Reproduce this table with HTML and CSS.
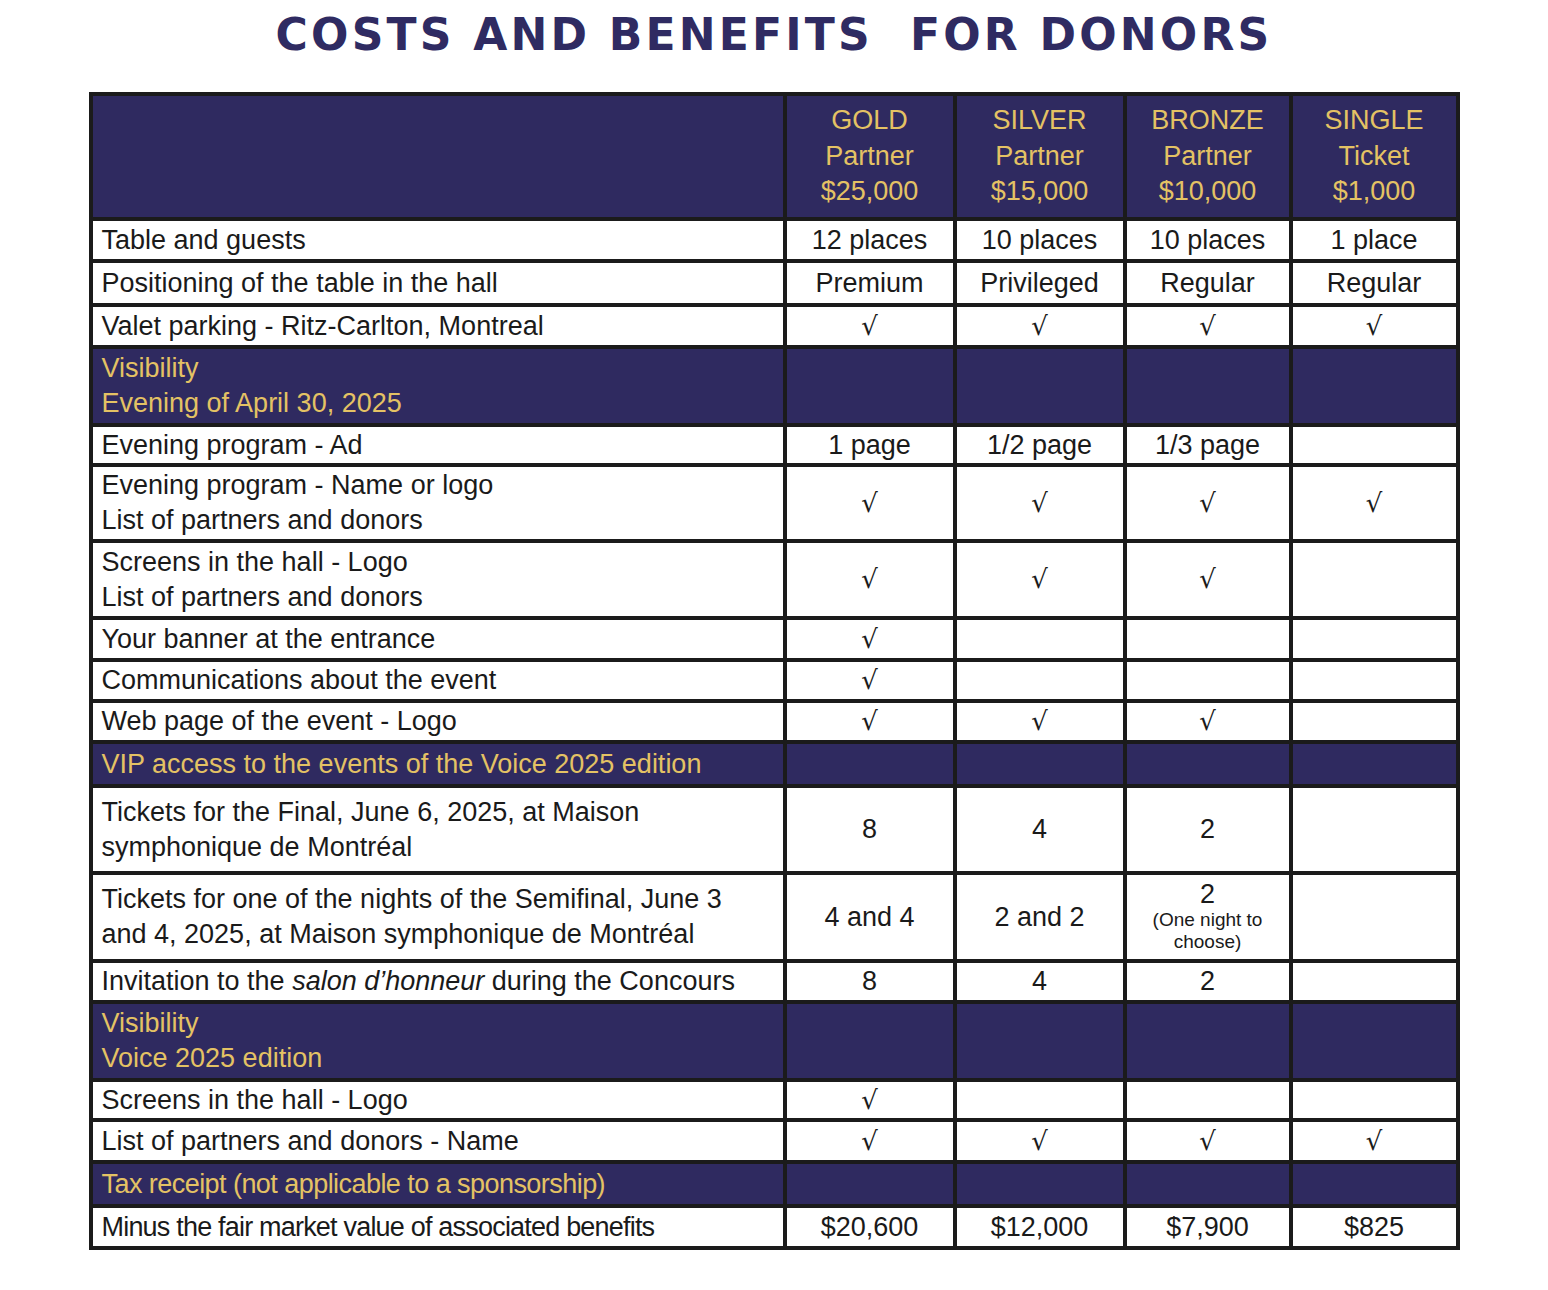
FILE: index.html
```html
<!DOCTYPE html>
<html>
<head>
<meta charset="utf-8">
<link rel="stylesheet" href="styles.css">
</head>
<body>
<h1 class="title">COSTS AND BENEFITS&nbsp; FOR DONORS</h1>
<table class="grid">
  <colgroup>
    <col class="c-label"><col class="c-gold"><col class="c-silver"><col class="c-bronze"><col class="c-single">
  </colgroup>
  <tr class="head h-head">
    <td></td>
    <td>GOLD<br>Partner<br>$25,000</td>
    <td>SILVER<br>Partner<br>$15,000</td>
    <td>BRONZE<br>Partner<br>$10,000</td>
    <td>SINGLE<br>Ticket<br>$1,000</td>
  </tr>
  <tr class="h42"><td>Table and guests</td><td>12 places</td><td>10 places</td><td>10 places</td><td>1 place</td></tr>
  <tr class="h44"><td>Positioning of the table in the hall</td><td>Premium</td><td>Privileged</td><td>Regular</td><td>Regular</td></tr>
  <tr class="h42"><td>Valet parking - Ritz-Carlton, Montreal</td><td class="ck">√</td><td class="ck">√</td><td class="ck">√</td><td class="ck">√</td></tr>
  <tr class="sec h78"><td>Visibility<br>Evening of April 30, 2025</td><td></td><td></td><td></td><td></td></tr>
  <tr class="h40"><td>Evening program - Ad</td><td>1 page</td><td>1/2 page</td><td>1/3 page</td><td></td></tr>
  <tr class="h76"><td>Evening program - Name or logo<br>List of partners and donors</td><td class="ck">√</td><td class="ck">√</td><td class="ck">√</td><td class="ck">√</td></tr>
  <tr class="h77"><td>Screens in the hall - Logo<br>List of partners and donors</td><td class="ck">√</td><td class="ck">√</td><td class="ck">√</td><td></td></tr>
  <tr class="h42"><td>Your banner at the entrance</td><td class="ck">√</td><td></td><td></td><td></td></tr>
  <tr class="h41"><td>Communications about the event</td><td class="ck">√</td><td></td><td></td><td></td></tr>
  <tr class="h41"><td>Web page of the event - Logo</td><td class="ck">√</td><td class="ck">√</td><td class="ck">√</td><td></td></tr>
  <tr class="sec h44"><td>VIP access to the events of the Voice 2025 edition</td><td></td><td></td><td></td><td></td></tr>
  <tr class="h87"><td>Tickets for the Final, June 6, 2025, at Maison<br>symphonique de Montréal</td><td>8</td><td>4</td><td>2</td><td></td></tr>
  <tr class="h88"><td>Tickets for one of the nights of the Semifinal, June 3<br>and 4, 2025, at Maison symphonique de Montréal</td><td>4 and 4</td><td>2 and 2</td><td class="stack">2<span class="note">(One night to<br>choose)</span></td><td></td></tr>
  <tr class="h41"><td>Invitation to the <em>salon d’honneur</em> during the Concours</td><td>8</td><td>4</td><td>2</td><td></td></tr>
  <tr class="sec h78"><td>Visibility<br>Voice 2025 edition</td><td></td><td></td><td></td><td></td></tr>
  <tr class="h40"><td>Screens in the hall - Logo</td><td class="ck">√</td><td></td><td></td><td></td></tr>
  <tr class="h42"><td>List of partners and donors - Name</td><td class="ck">√</td><td class="ck">√</td><td class="ck">√</td><td class="ck">√</td></tr>
  <tr class="sec h44"><td class="snug">Tax receipt (not applicable to a sponsorship)</td><td></td><td></td><td></td><td></td></tr>
  <tr class="h42"><td class="tight">Minus the fair market value of associated benefits</td><td>$20,600</td><td>$12,000</td><td>$7,900</td><td>$825</td></tr>
</table>
</body>
</html>
```
FILE: styles.css
```css
html, body {
  margin: 0;
  padding: 0;
  background: #ffffff;
}
body {
  font-family: "Liberation Sans", Arial, sans-serif;
  color: #1a1a1a;
}
.title {
  margin: 0;
  padding-top: 12px;
  height: 80px;
  box-sizing: border-box;
  text-align: center;
  font-family: "DejaVu Sans", "Liberation Sans", sans-serif;
  font-weight: bold;
  font-size: 44px;
  letter-spacing: 3.2px;
  line-height: 46px;
  color: #2f2b62;
  white-space: pre;
}
.grid {
  margin: 12px auto 0 auto;
  width: 1371px;
  border-collapse: collapse;
  table-layout: fixed;
  border: 4px solid #1b1b1b;
  font-size: 27px;
}
.c-label { width: 694px; }
.c-gold { width: 170px; }
.c-silver { width: 170px; }
.c-bronze { width: 166px; }
.c-single { width: 167px; }
.grid td {
  border: 4px solid #1b1b1b;
  padding: 0 0 0 9px;
  vertical-align: middle;
  line-height: 35px;
  text-align: center;
  color: #1a1a1a;
}
.grid td:first-child {
  text-align: left;
}
.grid td + td {
  padding: 0;
}
.grid td.tight {
  letter-spacing: -0.8px;
}
.grid td.snug {
  letter-spacing: -0.55px;
}
.head td, .sec td {
  background: #2f2a60;
  color: #e4c264;
}
.grid .sec td {
  color: #e4c264;
}
.head td {
  font-size: 27px;
  line-height: 35.5px;
}
.ck {
  font-family: "DejaVu Serif", "Liberation Serif", serif;
  font-size: 26px;
  color: #3a3a3a;
}
.grid td.stack {
  line-height: 26px;
}
.note {
  display: block;
  margin-top: 2px;
  font-size: 19px;
  line-height: 22px;
}
.h-head { height: 125px; }
.h40 { height: 40px; }
.h41 { height: 41px; }
.h42 { height: 42px; }
.h44 { height: 44px; }
.h76 { height: 76px; }
.h77 { height: 77px; }
.h78 { height: 78px; }
.h87 { height: 87px; }
.h88 { height: 88px; }
```
